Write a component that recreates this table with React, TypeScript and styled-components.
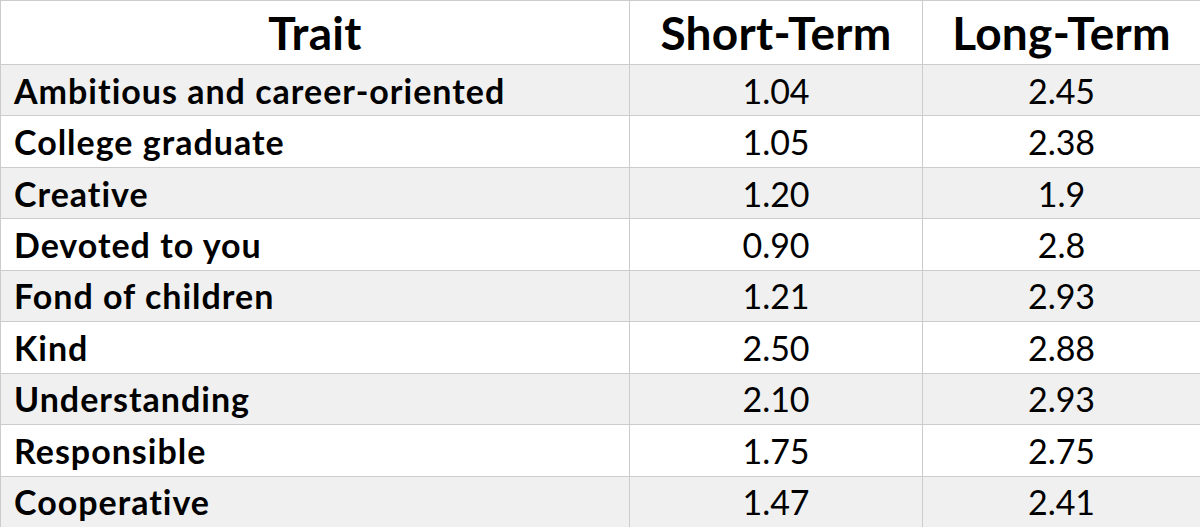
import { createGlobalStyle } from "styled-components";
import styled from "styled-components";

const GlobalStyle = createGlobalStyle`
  html, body {
    margin: 0;
    padding: 0;
    background: #ffffff;
  }
  body {
    font-family: "Lato", "Open Sans", sans-serif;
    color: #000;
  }
`;

const Table = styled.div`
  display: grid;
  grid-template-columns: 628px 292px 1fr;
  grid-template-rows: 63px repeat(9, 1fr);
  gap: 1px;
  width: 1200px;
  height: 527px;
  box-sizing: border-box;
  border-top: 1px solid #cccccc;
  border-left: 1px solid #cccccc;
  background: #cccccc;
`;

const HeadCell = styled.div`
  background: #ffffff;
  display: flex;
  align-items: center;
  justify-content: center;
  font-weight: 700;
  font-size: 46px;
  letter-spacing: 0.3px;
`;

const Cell = styled.div<{ $shade: boolean; $label?: boolean }>`
  background: ${(p) => (p.$shade ? "#f0f0f0" : "#ffffff")};
  display: flex;
  align-items: center;
  justify-content: ${(p) => (p.$label ? "flex-start" : "center")};
  padding-left: ${(p) => (p.$label ? "13px" : "0")};
  font-weight: ${(p) => (p.$label ? 700 : 400)};
  font-size: 34px;
  letter-spacing: ${(p) => (p.$label ? "1px" : "0")};
`;

const rows: [string, string, string][] = [
  ["Ambitious and career-oriented", "1.04", "2.45"],
  ["College graduate", "1.05", "2.38"],
  ["Creative", "1.20", "1.9"],
  ["Devoted to you", "0.90", "2.8"],
  ["Fond of children", "1.21", "2.93"],
  ["Kind", "2.50", "2.88"],
  ["Understanding", "2.10", "2.93"],
  ["Responsible", "1.75", "2.75"],
  ["Cooperative", "1.47", "2.41"],
];

export default function App() {
  return (
    <>
      <GlobalStyle />
      <Table>
        <HeadCell>Trait</HeadCell>
        <HeadCell>Short-Term</HeadCell>
        <HeadCell>Long-Term</HeadCell>
        {rows.map(([trait, short, long], i) => (
          <>
            <Cell key={trait} $shade={i % 2 === 0} $label>
              {trait}
            </Cell>
            <Cell key={trait + "s"} $shade={i % 2 === 0}>
              {short}
            </Cell>
            <Cell key={trait + "l"} $shade={i % 2 === 0}>
              {long}
            </Cell>
          </>
        ))}
      </Table>
    </>
  );
}
